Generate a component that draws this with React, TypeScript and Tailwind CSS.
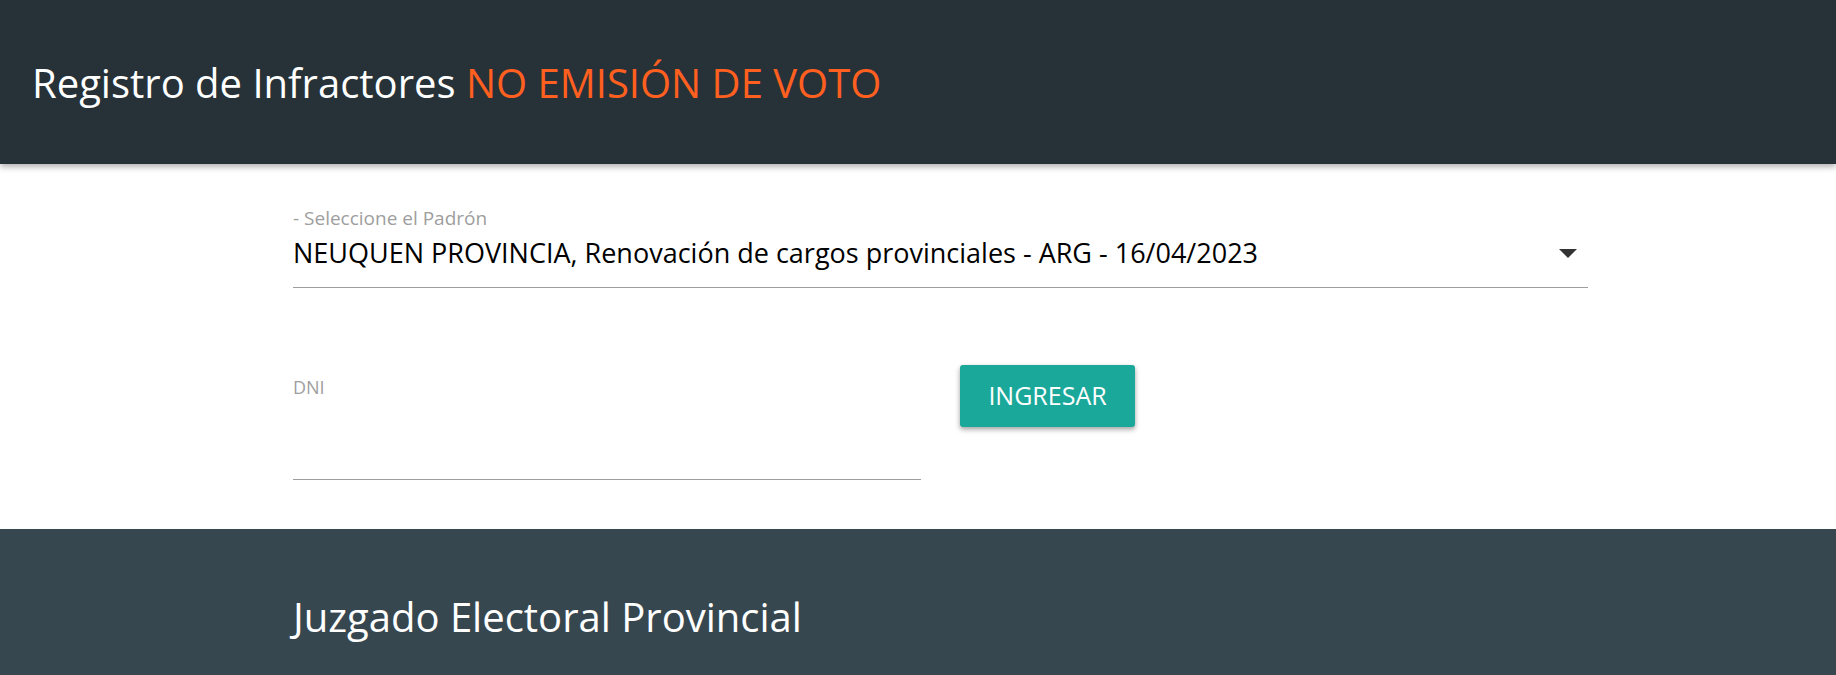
import { useState } from "react";

const font = { fontFamily: '"Open Sans", "Noto Sans", Arial, sans-serif' };

function Header() {
  return (
    <header className="relative z-10 flex h-[164px] items-center bg-[#263238] px-[32px] pt-[2px] shadow-[0_3px_6px_rgba(0,0,0,0.3)]">
      <h1 className="text-[40px] font-normal leading-none text-white">
        Registro de Infractores <span className="text-[#ff5f1f]">NO EMISIÓN DE VOTO</span>
      </h1>
    </header>
  );
}

function PadronSelect() {
  return (
    <div className="w-[1295px]">
      <label className="block text-[19px] leading-[22px] text-[#9e9e9e]">- Seleccione el Padrón</label>
      <div className="flex h-[59px] items-center justify-between border-b border-[#9e9e9e] pb-[10px]">
        <span className="text-[27px] text-black">
          NEUQUEN PROVINCIA, Renovación de cargos provinciales - ARG - 16/04/2023
        </span>
        <svg width="18" height="9" viewBox="0 0 18 9" className="mr-[11px]">
          <path d="M0 0 L18 0 L9 9 Z" fill="#333" />
        </svg>
      </div>
    </div>
  );
}

function DniForm() {
  const [dni, setDni] = useState("");
  return (
    <div className="mt-[76px] flex items-start">
      <div className="w-[628px] pt-[12px]">
        <label htmlFor="dni" className="block text-[18px] leading-[22px] text-[#9e9e9e]">
          DNI
        </label>
        <input
          id="dni"
          value={dni}
          onChange={(e) => setDni(e.target.value)}
          className="mt-[36px] block h-[46px] w-full border-b border-[#9e9e9e] bg-transparent text-[20px] outline-none"
        />
      </div>
      <button className="ml-[39px] mt-[1px] h-[62px] w-[175px] rounded-[3px] bg-[#1aa89a] text-[25px] text-white shadow-[0_2px_4px_rgba(0,0,0,0.25),0_3px_6px_rgba(0,0,0,0.15)]">
        INGRESAR
      </button>
    </div>
  );
}

function Footer() {
  return (
    <footer className="bg-[#37474f] pl-[293px] pt-[64px] pb-[40px] text-white">
      <h2 className="text-[40px] leading-[48px] font-normal">Juzgado Electoral Provincial</h2>
      <p className="mt-[28px] text-[18px] text-[#e0e0e0]">
        Poder Judicial de la Provincia del Neuquén
      </p>
    </footer>
  );
}

export default function App() {
  return (
    <div className="min-h-screen bg-white" style={font}>
      <Header />
      <main className="h-[365px] pl-[293px] pt-[43px]">
        <PadronSelect />
        <DniForm />
      </main>
      <Footer />
    </div>
  );
}
